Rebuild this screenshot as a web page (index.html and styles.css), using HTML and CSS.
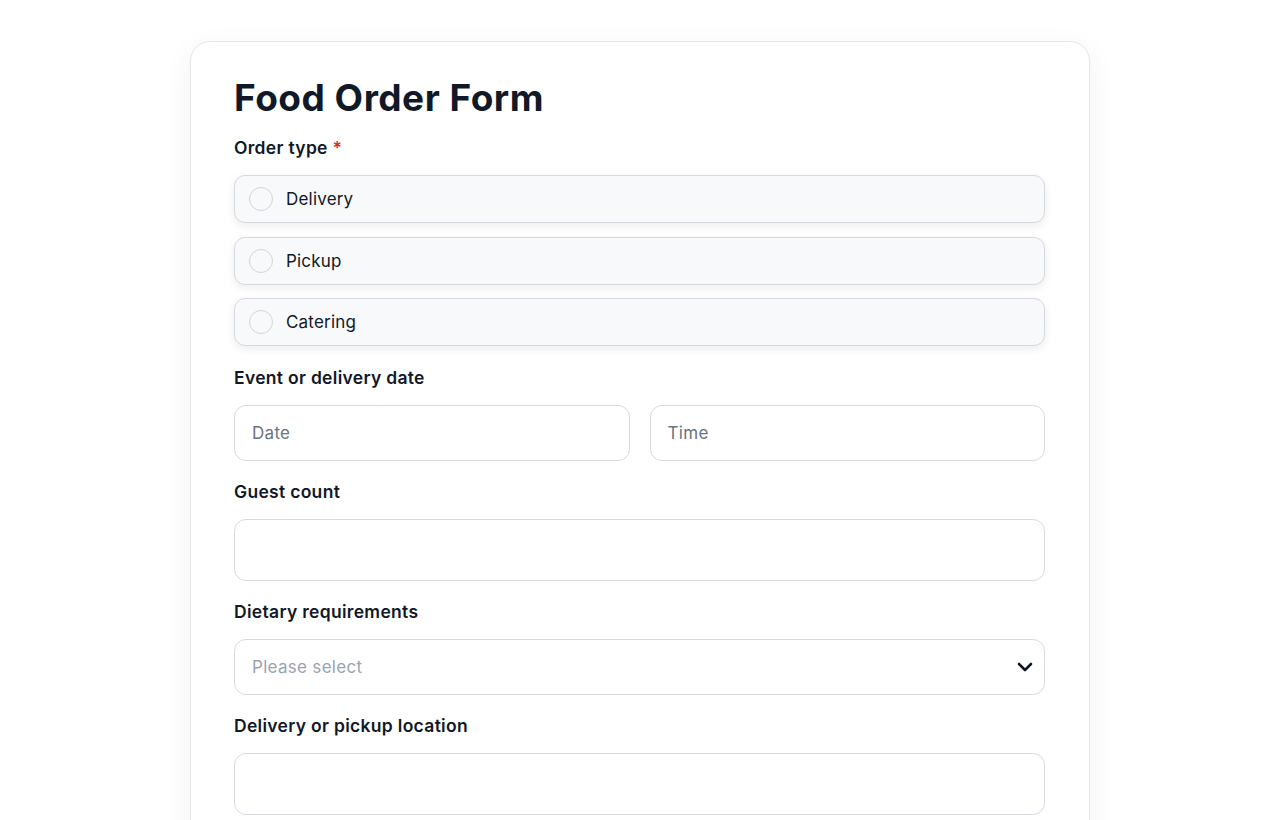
FILE: index.html
```html
<!DOCTYPE html>
<html lang="en">
<head>
    <meta charset="UTF-8">
    <meta name="viewport" content="width=device-width, initial-scale=1.0">
    <title>Food Order Form</title>
    <link rel="stylesheet" href="styles.css">
</head>
<body>
    <div class="card">
        <h1 class="form-title">Food Order Form</h1>

        <div class="field">
            <div class="field-label">Order type <span class="required">*</span></div>
            <div class="options">
                <label class="option"><span class="radio"></span><span class="option-text">Delivery</span></label>
                <label class="option"><span class="radio"></span><span class="option-text">Pickup</span></label>
                <label class="option"><span class="radio"></span><span class="option-text">Catering</span></label>
            </div>
        </div>

        <div class="field">
            <div class="field-label">Event or delivery date</div>
            <div class="row">
                <div class="input"><span class="placeholder">Date</span></div>
                <div class="input"><span class="placeholder">Time</span></div>
            </div>
        </div>

        <div class="field">
            <div class="field-label">Guest count</div>
            <div class="input tall"></div>
        </div>

        <div class="field">
            <div class="field-label">Dietary requirements</div>
            <div class="input select">
                <span class="placeholder light">Please select</span>
                <svg class="chevron" width="16" height="10" viewBox="0 0 16 10">
                    <path d="M2 2 L8 8 L14 2" fill="none" stroke="#111827" stroke-width="2.6" stroke-linecap="round" stroke-linejoin="round"/>
                </svg>
            </div>
        </div>

        <div class="field">
            <div class="field-label">Delivery or pickup location</div>
            <div class="input tall"></div>
        </div>
    </div>
</body>
</html>
```

FILE: styles.css
```css
body {
    margin: 0;
    background: #ffffff;
    font-family: Inter, "Noto Sans", sans-serif;
    color: #111827;
}

.card {
    width: 811px;
    margin: 41px auto 0;
    padding: 33px 44px 40px 43px;
    background: #ffffff;
    border: 1px solid #e5e7eb;
    border-radius: 20px;
    box-shadow: 0 8px 30px rgba(17, 24, 39, 0.06);
    display: flex;
    flex-direction: column;
    gap: 20px;
}

.form-title {
    margin: 0 0 -4px;
    font-size: 37px;
    line-height: 46px;
    font-weight: 700;
    letter-spacing: 0.5px;
    color: #111827;
}

.field {
    display: flex;
    flex-direction: column;
    gap: 16px;
}

.field-label {
    font-size: 17.5px;
    line-height: 22px;
    font-weight: 600;
    letter-spacing: 0.3px;
    color: #111827;
}

.required {
    color: #dc2626;
}

.options {
    display: flex;
    flex-direction: column;
    gap: 13.5px;
    margin-bottom: 1px;
}

.option {
    height: 46px;
    display: flex;
    align-items: center;
    padding: 0 14px;
    background: #f8f9fb;
    border: 1px solid #d6d9df;
    border-radius: 11px;
    box-shadow: 0 3px 8px rgba(17, 24, 39, 0.08);
}

.radio {
    width: 22px;
    height: 22px;
    border: 1px solid #d1d5db;
    border-radius: 50%;
    background: #f8f9fb;
    margin-right: 13px;
}

.option-text {
    font-size: 17px;
    letter-spacing: 0.2px;
    color: #111827;
}

.row {
    display: flex;
    gap: 20px;
}

.row .input {
    flex: 1;
}

.input {
    height: 54px;
    box-sizing: content-box;
    display: flex;
    align-items: center;
    padding: 0 17px;
    border: 1px solid #d6d9df;
    border-radius: 12px;
    background: #ffffff;
}

.input.tall {
    height: 60px;
}

.placeholder {
    font-size: 17px;
    letter-spacing: 0.3px;
    color: #6b7280;
}

.placeholder.light {
    color: #9ca3af;
}

.select {
    justify-content: space-between;
    padding-right: 11px;
}
```
